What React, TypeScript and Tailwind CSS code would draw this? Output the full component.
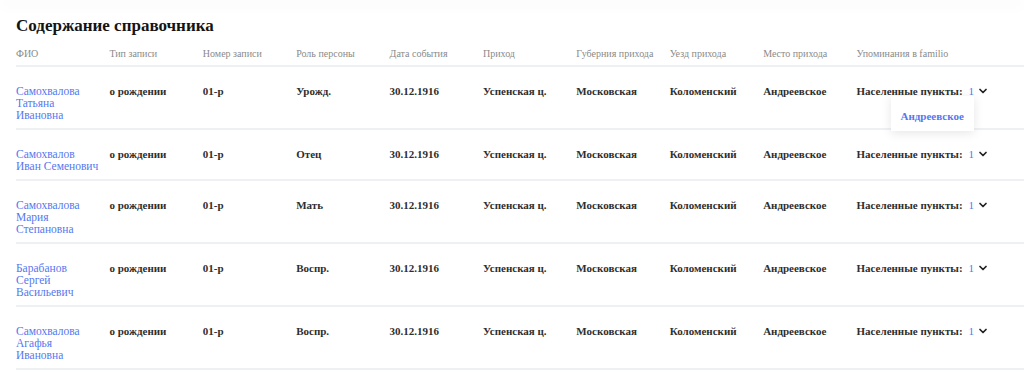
import { ChevronDown } from 'lucide-react'

type Row = {
  name: string[]
  role: string
  open?: boolean
}

const rows: Row[] = [
  { name: ['Самохвалова', 'Татьяна', 'Ивановна'], role: 'Урожд.', open: true },
  { name: ['Самохвалов', 'Иван Семенович'], role: 'Отец' },
  { name: ['Самохвалова', 'Мария', 'Степановна'], role: 'Мать' },
  { name: ['Барабанов', 'Сергей', 'Васильевич'], role: 'Воспр.' },
  { name: ['Самохвалова', 'Агафья', 'Ивановна'], role: 'Воспр.' },
]

const headers = [
  'ФИО',
  'Тип записи',
  'Номер записи',
  'Роль персоны',
  'Дата события',
  'Приход',
  'Губерния прихода',
  'Уезд прихода',
  'Место прихода',
  'Упоминания в familio',
]

const cols = 'grid grid-cols-[repeat(9,93.4px)_1fr]'

function Cell({ children }: { children: React.ReactNode }) {
  return <div className="pr-2 text-[11px] font-semibold text-[#2e2e2e]">{children}</div>
}

export default function App() {
  return (
    <div className="min-h-[373px] bg-white font-['Liberation_Serif',serif] overflow-hidden">
      <div className="h-px -mt-px shadow-[0_3px_14px_rgba(0,0,0,0.18)]" />
      <div className="pl-4 pt-[16px]">
        <h2 className="text-[17px] leading-5 font-bold text-[#141414]">Содержание справочника</h2>

        <div className="mt-[12px]">
          <div className={`${cols} border-b-2 border-[#eef0f4] pb-[5px] text-[10px] leading-3 text-[#8a8a8a]`}>
            {headers.map((h) => (
              <div key={h} className="pr-2">
                {h}
              </div>
            ))}
          </div>

          {rows.map((r, i) => (
            <div
              key={i}
              className={`${cols} border-b-2 border-[#eef0f4] pt-[18px] pb-[7px] text-[11.5px] leading-[12px]`}
            >
              <div className="pr-2 text-[#5577f0]">
                {r.name.map((n) => (
                  <div key={n}>{n}</div>
                ))}
              </div>
              <Cell>о рождении</Cell>
              <Cell>01-р</Cell>
              <Cell>{r.role}</Cell>
              <Cell>30.12.1916</Cell>
              <Cell>Успенская ц.</Cell>
              <Cell>Московская</Cell>
              <Cell>Коломенский</Cell>
              <Cell>Андреевское</Cell>
              <div className="relative">
                <div className="flex items-center text-[11px] font-semibold text-[#2e2e2e]">
                  <span>Населенные пункты:</span>
                  <span className="ml-[6px] font-normal text-[#5577f0]">1</span>
                  <ChevronDown className="ml-[3px] h-3 w-3 text-[#222]" strokeWidth={3.5} />
                </div>
                {r.open && (
                  <div className="absolute left-[34px] top-[11px] z-10 bg-white px-[10px] pt-[14px] pb-[9px] shadow-[0_2px_10px_rgba(0,0,0,0.1)]">
                    <span className="text-[11px] font-semibold text-[#5577f0]">Андреевское</span>
                  </div>
                )}
              </div>
            </div>
          ))}
        </div>
      </div>
    </div>
  )
}
